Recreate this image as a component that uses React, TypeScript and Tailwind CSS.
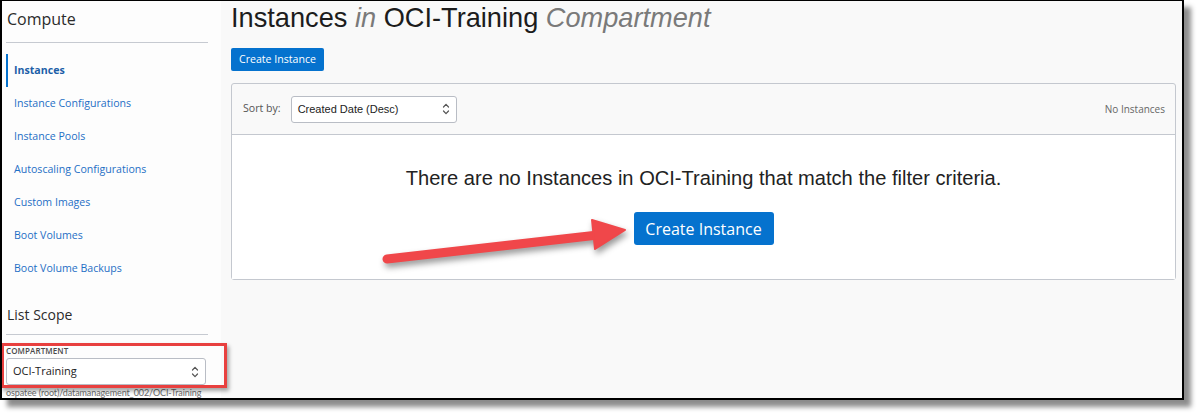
import React from "react";

const ui = { fontFamily: '"Open Sans", "Noto Sans", sans-serif' };
const arial = { fontFamily: '"Liberation Sans", Arial, sans-serif' };

function UpDown() {
  return (
    <svg width="8" height="14" viewBox="0 0 8 14" fill="none" stroke="#555" strokeWidth="1.2" strokeLinecap="round" strokeLinejoin="round">
      <path d="M1.5 5 L4 2.3 L6.5 5" />
      <path d="M1.5 9 L4 11.7 L6.5 9" />
    </svg>
  );
}

const navItems = [
  "Instances",
  "Instance Configurations",
  "Instance Pools",
  "Autoscaling Configurations",
  "Custom Images",
  "Boot Volumes",
  "Boot Volume Backups",
];

export default function App() {
  return (
    <div className="w-[1198px] h-[415px] bg-white">
      <div className="relative w-[1184px] h-[400px] border-l-2 border-t border-r-2 border-b-2 border-black shadow-[7px_7px_5px_rgba(0,0,0,0.45)]">
        <div className="flex h-full overflow-hidden">
          {/* sidebar */}
          <aside className="w-[219px] shrink-0 bg-[#fdfdfd] pt-[8px]" style={ui}>
            <h2 className="ml-[5px] text-[16px] leading-[20px] text-[#2b2b2b]">Compute</h2>
            <div className="ml-[4px] mt-[13px] w-[202px] border-t border-[#c6cad1]" />
            <nav className="mt-[11px]">
              {navItems.map((item, i) => (
                <div
                  key={item}
                  className={
                    "ml-[4px] h-[33px] flex items-center pl-[6px] border-l-2 text-[10.6px] " +
                    (i === 0 ? "border-[#0572ce] font-bold text-[#1d5fa8]" : "border-transparent text-[#1f6fc5]")
                  }
                >
                  {item}
                </div>
              ))}
            </nav>
            <h3 className="ml-[5px] mt-[20px] text-[14px] leading-[20px] text-[#2b2b2b]">List Scope</h3>
            <div className="ml-[4px] mt-[9px] w-[202px] border-t border-[#c6cad1]" />
            <div className="relative z-10 -ml-[1px] mt-[8px] w-[226px] border-[3px] border-[#e8403f] pl-[2px] shadow-[2px_3px_4px_rgba(0,0,0,0.35)]">
              <div className="text-[8px] leading-[9px] font-semibold text-[#4a4a4a] tracking-[0.1px]">COMPARTMENT</div>
              <div className="mt-[3px] w-[200px] h-[27px] bg-white border border-[#b9bdc5] rounded-[3px] flex items-center justify-between pl-[6px] pr-[6px]">
                <span className="text-[11px] text-[#222]">OCI-Training</span>
                <UpDown />
              </div>
            </div>
            <div
              className="ml-[4px] whitespace-nowrap text-[9px] leading-[10px] tracking-[-0.1px] text-[#6b6b6b]"
              style={{ fontFamily: 'Lato, "Liberation Sans", sans-serif' }}
            >
              ospatee (root)/datamanagement_002/OCI-Training
            </div>
          </aside>

          {/* main */}
          <main className="flex-1 bg-[#f9f9f9] pl-[10px] pr-[6px] pt-[2px]">
            <h1 className="text-[27.2px] leading-[30px] text-[#1c1c1c]" style={arial}>
              Instances <i className="text-[#7a7a7a]">in</i> OCI-Training <i className="text-[#7a7a7a]">Compartment</i>
            </h1>
            <button
              className="mt-[15px] h-[23px] w-[93px] rounded-[2px] bg-[#0572ce] text-white text-[10.6px]"
              style={ui}
            >
              Create Instance
            </button>
            <section className="mt-[12px] border border-[#c4c8cf] rounded-[3px]">
              <div className="h-[51px] flex items-center justify-between pl-[11px] pr-[10px] border-b border-[#c4c8cf]">
                <div className="flex items-center">
                  <span className="text-[10.6px] text-[#555]" style={ui}>Sort by:</span>
                  <div className="ml-[10px] w-[166px] h-[27px] bg-white border border-[#b9bdc5] rounded-[3px] flex items-center justify-between pl-[6px] pr-[6px]">
                    <span className="text-[11px] text-[#222]" style={arial}>Created Date (Desc)</span>
                    <UpDown />
                  </div>
                </div>
                <span className="text-[10px] text-[#666]" style={ui}>No Instances</span>
              </div>
              <div className="bg-white pt-[31px] pb-[34px] flex flex-col items-center">
                <p className="text-[20.1px] leading-[24px] text-[#222]" style={arial}>
                  There are no Instances in OCI-Training that match the filter criteria.
                </p>
                <button
                  className="mt-[22px] h-[33px] w-[140px] rounded-[3px] bg-[#0572ce] text-white text-[16px]"
                  style={ui}
                >
                  Create Instance
                </button>
              </div>
            </section>
          </main>
        </div>

        {/* annotation arrow */}
        <svg
          className="absolute -left-[2px] -top-[1px] pointer-events-none"
          width="1184"
          height="400"
          style={{ filter: "drop-shadow(2px 4px 3px rgba(0,0,0,0.4))" }}
        >
          <line x1="387" y1="259" x2="598" y2="235" stroke="#f0474a" strokeWidth="9" strokeLinecap="round" />
          <polygon points="592,220 625,230 595,249" fill="#f0474a" strokeLinejoin="round" stroke="#f0474a" strokeWidth="2" />
        </svg>
      </div>
    </div>
  );
}
